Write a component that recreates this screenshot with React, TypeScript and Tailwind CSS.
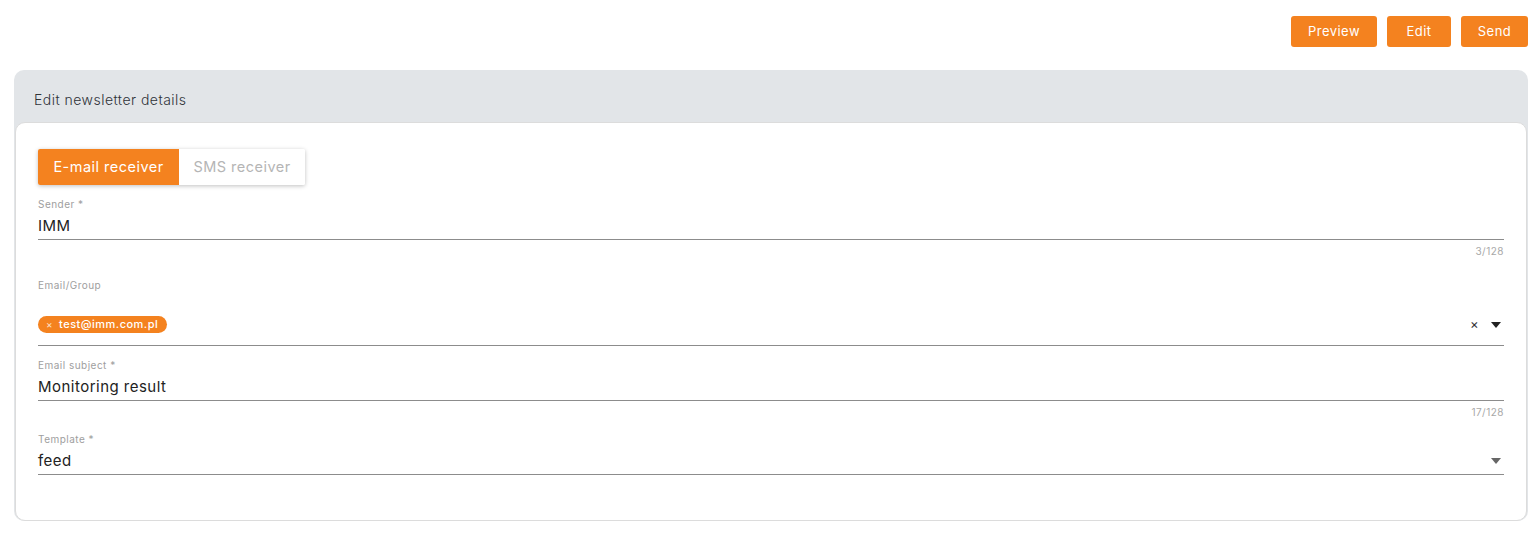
import React from 'react';

const font = { fontFamily: 'Inter, "Noto Sans", sans-serif' };

function Caret({ className }: { className?: string }) {
  return (
    <svg width="10" height="6" viewBox="0 0 10 6" className={className}>
      <path d="M0 0h10L5 6z" fill="currentColor" />
    </svg>
  );
}

function TextField({
  label,
  value,
  counter,
}: {
  label: string;
  value: string;
  counter?: string;
}) {
  return (
    <div className="flex flex-col">
      <span className="text-[10px] leading-[12px] text-[#9e9e9e]">{label}</span>
      <div className="mt-[6px] border-b border-[#8c8c8c] pb-[3px] text-[15px] leading-[20px] text-[#222]">
        {value}
      </div>
      {counter && (
        <span className="mt-[5px] self-end text-[10px] leading-[12px] text-[#a8a8a8]">
          {counter}
        </span>
      )}
    </div>
  );
}

export default function App() {
  const buttons: [string, string][] = [
    ['Preview', 'w-[86px]'],
    ['Edit', 'w-[64px]'],
    ['Send', 'w-[67px]'],
  ];
  return (
    <div className="min-h-[539px] bg-white px-[10px] pt-[16px] tracking-[0.03em]" style={font}>
      <div className="flex justify-end gap-[10px]">
        {buttons.map(([b, w]) => (
          <button
            key={b}
            className={`${w} h-[31px] rounded-[3px] bg-[#f4821f] text-[13px] text-white`}
          >
            {b}
          </button>
        ))}
      </div>

      <div className="ml-[4px] mt-[23px] rounded-[10px] bg-[#e2e5e8]">
        <div className="px-[20px] pb-[12px] pt-[20px] text-[14px] font-light leading-[20px] text-[#2f3338]">
          Edit newsletter details
        </div>
        <div className="mx-px rounded-[10px] border border-[#dcdcdc] bg-white px-[22px] pb-[45px] pt-[26px]">
          <div className="inline-flex overflow-hidden rounded-[2px] shadow-[0_1px_4px_rgba(0,0,0,0.25)]">
            <div className="flex h-[36px] w-[141px] items-center justify-center bg-[#f4821f] text-[14.5px] text-white">
              E-mail receiver
            </div>
            <div className="flex h-[36px] w-[126px] items-center justify-center bg-white text-[14.5px] text-[#b5b5b5]">
              SMS receiver
            </div>
          </div>

          <div className="mt-[13px]">
            <TextField label="Sender *" value="IMM" counter="3/128" />
          </div>

          <div className="mt-[22px] flex flex-col">
            <span className="text-[10px] leading-[12px] text-[#9e9e9e]">Email/Group</span>
            <div className="mt-[25px] flex items-center border-b border-[#8c8c8c] pb-[12px]">
              <span className="flex h-[17px] items-center gap-[6px] rounded-full bg-[#f4821f] pl-[8px] pr-[9px] text-[11px] font-medium text-white">
                <span className="text-[10px] font-normal text-[#fde3cc]">×</span>
                test@imm.com.pl
              </span>
              <span className="ml-auto text-[13px] leading-none text-[#333]">×</span>
              <Caret className="ml-[12px] mr-[3px] text-[#222]" />
            </div>
          </div>

          <div className="mt-[13px]">
            <TextField label="Email subject *" value="Monitoring result" counter="17/128" />
          </div>

          <div className="mt-[15px] flex flex-col">
            <span className="text-[10px] leading-[12px] text-[#9e9e9e]">Template *</span>
            <div className="mt-[6px] flex items-center border-b border-[#8c8c8c] pb-[3px] text-[15px] leading-[20px] text-[#222]">
              feed
              <Caret className="ml-auto mr-[3px] text-[#666]" />
            </div>
          </div>
        </div>
      </div>
    </div>
  );
}
